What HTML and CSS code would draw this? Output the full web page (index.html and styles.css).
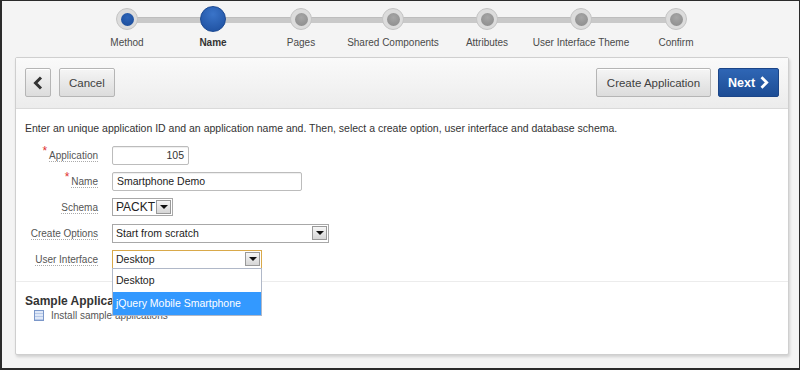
FILE: index.html
```html
<!DOCTYPE html>
<html lang="en">
<head>
  <meta charset="UTF-8" />
  <title>Create Application</title>
  <link rel="stylesheet" href="styles.css">
</head>
<body>
<div class="frame">

  <!-- wizard progress -->
  <ul class="steps">
    <li class="step done" style="width:86px"><span class="dot"></span><span class="label">Method</span></li>
    <li class="step current" style="width:86px"><span class="dot"></span><span class="label">Name</span></li>
    <li class="step" style="width:90px"><span class="dot"></span><span class="label">Pages</span></li>
    <li class="step" style="width:94px"><span class="dot"></span><span class="label">Shared Components</span></li>
    <li class="step" style="width:94px"><span class="dot"></span><span class="label">Attributes</span></li>
    <li class="step" style="width:94px"><span class="dot"></span><span class="label">User Interface Theme</span></li>
    <li class="step" style="width:96px"><span class="dot"></span><span class="label">Confirm</span></li>
  </ul>

  <div class="panel">
    <div class="panel-head">
      <div class="btn-group">
        <button class="btn btn-back"><svg width="10" height="14" viewBox="0 0 10 14"><path d="M8 1.5 L2.5 7 L8 12.5" fill="none" stroke="#333" stroke-width="3"/></svg></button>
        <button class="btn">Cancel</button>
      </div>
      <div class="btn-group">
        <button class="btn btn-create">Create Application</button>
        <button class="btn btn-next">Next <svg width="9" height="13" viewBox="0 0 9 13"><path d="M1.5 1.2 L6.8 6.5 L1.5 11.8" fill="none" stroke="#fff" stroke-width="2.8"/></svg></button>
      </div>
    </div>

    <div class="panel-body">
      <p class="intro">Enter an unique application ID and an application name and. Then, select a create option, user interface and database schema.</p>

      <div class="form">
        <div class="row">
          <label class="lbl"><span class="req">*</span><span class="u">Application</span></label>
          <div class="field input input-id">105</div>
        </div>
        <div class="row">
          <label class="lbl"><span class="req">*</span><span class="u">Name</span></label>
          <div class="field input input-name">Smartphone Demo</div>
        </div>
        <div class="row">
          <label class="lbl"><span class="u">Schema</span></label>
          <div class="field select select-schema"><span>PACKT</span><span class="arrow"></span></div>
        </div>
        <div class="row">
          <label class="lbl"><span class="u">Create Options</span></label>
          <div class="field select select-create"><span>Start from scratch</span><span class="arrow"></span></div>
        </div>
        <div class="row">
          <label class="lbl"><span class="u">User Interface</span></label>
          <div class="select-wrap">
            <div class="field select select-ui"><span>Desktop</span><span class="arrow"></span></div>
            <ul class="dropdown">
              <li>Desktop</li>
              <li class="hl">jQuery Mobile Smartphone</li>
            </ul>
          </div>
        </div>
      </div>
    </div>

    <div class="sample">
      <h3>Sample Applications</h3>
      <div class="check"><span class="box"></span>Install sample applications</div>
    </div>
  </div>

</div>
</body>
</html>
```

FILE: styles.css
```css
* {
  box-sizing: border-box;
}

body {
  margin: 0;
  font-family: "Liberation Sans", Arial, sans-serif;
  color: #333;
}

.frame {
  width: 800px;
  height: 370px;
  border: 1px solid #2b2b2b;
  border-left-width: 2px;
  border-bottom-width: 2px;
  background: #f4f4f4;
  overflow: hidden;
}

/* steps */
.steps {
  list-style: none;
  margin: 0;
  padding: 5px 0 0 82px;
  display: flex;
  height: 56px;
}

.step {
  position: relative;
  display: flex;
  flex-direction: column;
  align-items: center;
}

.step::before,
.step::after {
  content: "";
  position: absolute;
  top: 11px;
  height: 5px;
  background: #c9c9c9;
  border-top: 1px solid #bdbdbd;
  width: 50%;
}

.step::before { left: 0; }
.step::after { right: 0; }
.step:first-child::before,
.step:last-child::after {
  display: none;
}

.dot {
  position: relative;
  z-index: 1;
  width: 22px;
  height: 22px;
  margin: 2px 0 3px;
  border-radius: 50%;
  background: #dcdcdc;
  border: 1px solid #c4c4c4;
  display: flex;
  align-items: center;
  justify-content: center;
}

.dot::after {
  content: "";
  width: 13px;
  height: 13px;
  border-radius: 50%;
  background: radial-gradient(circle at 50% 35%, #a6a6a6, #8a8a8a);
}

.done .dot::after {
  background: radial-gradient(circle at 50% 35%, #2d64b8, #1a4a96);
}

.current .dot {
  width: 26px;
  height: 26px;
  margin: 0 0 1px;
  background: radial-gradient(circle at 50% 30%, #3a74c9, #1c4d9c);
  border: 1px solid #1a4892;
}

.current .dot::after {
  display: none;
}

.label {
  font-size: 10px;
  color: #4a4a4a;
  white-space: nowrap;
  margin-top: 4px;
}

.current .label {
  font-weight: bold;
  color: #333;
}

/* panel */
.panel {
  margin-left: 13px;
  width: 774px;
  height: 298px;
  background: #fff;
  border: 1px solid #cfcfcf;
  border-radius: 2px;
  box-shadow: 1px 2px 3px rgba(0, 0, 0, 0.15);
  position: relative;
}

.panel-head {
  height: 51px;
  padding: 10px 9px 0 9px;
  display: flex;
  justify-content: space-between;
  background: linear-gradient(#fafafa, #ececec);
  border-bottom: 1px solid #dadada;
}

.btn-group {
  display: flex;
  gap: 7px;
}

.btn {
  height: 29px;
  font-family: inherit;
  font-size: 11.5px;
  color: #404040;
  padding: 0 9px;
  border: 1px solid #b5b5b5;
  border-radius: 2px;
  background: linear-gradient(#f5f5f5, #dcdcdc);
  box-shadow: inset 0 1px 0 #fff;
  display: flex;
  align-items: center;
  white-space: nowrap;
}

.btn-back {
  width: 26px;
  justify-content: center;
  padding: 0;
  margin-right: 1px;
}

.btn-create {
  width: 115px;
  padding: 0;
  justify-content: center;
}

.btn-next {
  width: 61px;
  justify-content: center;
  gap: 5px;
  color: #fff;
  font-weight: bold;
  font-size: 12.5px;
  background: linear-gradient(#2f66b5, #1d4d95);
  border-color: #1b4588;
  box-shadow: none;
}

.panel-body {
  padding: 13px 9px 0 9px;
  height: 173px;
  border-bottom: 1px solid #ececec;
}

.intro {
  margin: 0 0 8px;
  font-size: 10.5px;
  color: #333;
}

.row {
  display: flex;
  align-items: center;
  height: 26px;
}

.lbl {
  width: 73px;
  margin-right: 14px;
  text-align: right;
  font-size: 10px;
  color: #555;
  white-space: nowrap;
}

.u {
  border-bottom: 1px dotted #aaa;
}

.req {
  color: #e03030;
  font-size: 12px;
  position: relative;
  top: -4px;
  margin-right: 2px;
}

.field {
  height: 19px;
  font-size: 10.5px;
  color: #222;
  display: flex;
  align-items: center;
}

.input {
  border: 1px solid #bcbcbc;
  border-radius: 2px;
  padding: 0 4px;
  box-shadow: inset 0 1px 1px #eee;
}

.input-id {
  width: 77px;
  justify-content: flex-end;
  color: #333;
}

.input-name {
  width: 190px;
}

.select {
  border: 1px solid #a8a8a8;
  padding: 0 1px 0 3px;
  justify-content: space-between;
  background: #fff;
}

.select-schema {
  width: 61px;
  height: 18px;
  font-size: 12px;
  padding-left: 3px;
}

.select-create {
  width: 217px;
}

.select-ui {
  width: 150px;
  height: 19px;
  border-color: #d9a94a;
}

.arrow {
  width: 15px;
  height: 14px;
  border: 1px solid #999;
  background: linear-gradient(#f6f6f6, #d6d6d6);
  position: relative;
}

.arrow::after {
  content: "";
  position: absolute;
  left: 3px;
  top: 4px;
  border-left: 4px solid transparent;
  border-right: 4px solid transparent;
  border-top: 4px solid #111;
}

.select-wrap {
  position: relative;
}

.dropdown {
  position: absolute;
  left: 0;
  top: 18px;
  z-index: 5;
  width: 150px;
  margin: 0;
  padding: 0;
  list-style: none;
  background: #fff;
  border: 1px solid #b0b8c8;
  font-size: 10.5px;
}

.dropdown li {
  height: 23px;
  line-height: 23px;
  padding-left: 3px;
  color: #222;
}

.dropdown .hl {
  background: #3399ff;
  color: #fff;
}

/* sample applications */
.sample {
  padding: 12px 9px 0 9px;
}

.sample h3 {
  margin: 0;
  font-size: 12px;
  color: #333;
}

.check {
  display: flex;
  align-items: center;
  font-size: 10px;
  color: #555;
  padding-left: 9px;
  margin-top: 2px;
}

.box {
  width: 10px;
  height: 11px;
  margin-right: 7px;
  border: 1px solid #7b97c9;
  background: repeating-linear-gradient(#dfe8f7 0 2px, #b6c8e8 2px 3px);
}
```
